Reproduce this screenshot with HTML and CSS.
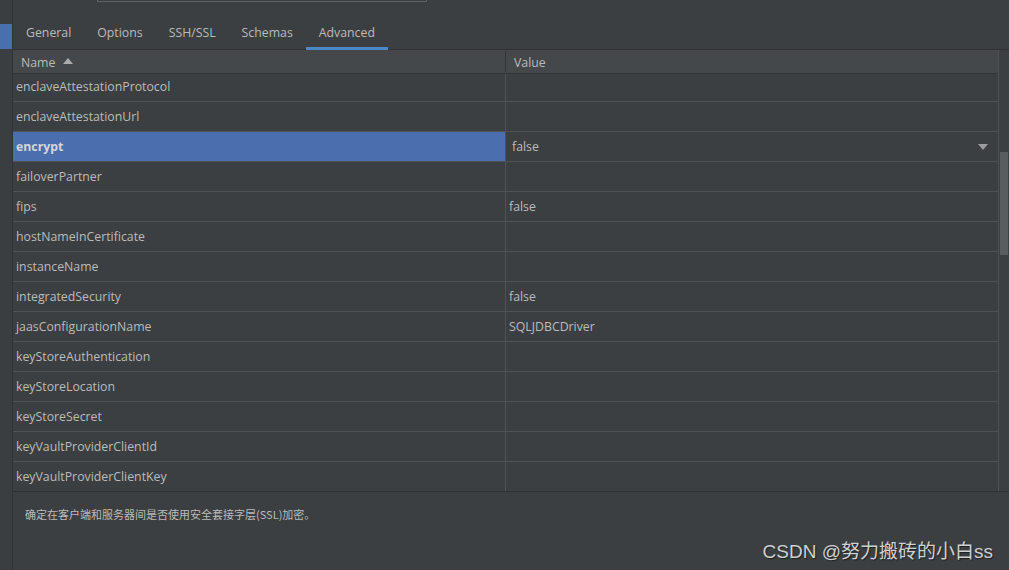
FILE: index.html
```html
<!DOCTYPE html>
<html>
<head>
<meta charset="utf-8">
<link rel="stylesheet" href="styles.css">
</head>
<body>
<div class="app">
  <div class="strip"><div class="strip-mark"></div></div>
  <div class="main">
    <div class="topbar"><div class="field"></div></div>
    <div class="tabs">
      <div class="tab">General</div>
      <div class="tab">Options</div>
      <div class="tab">SSH/SSL</div>
      <div class="tab">Schemas</div>
      <div class="tab active">Advanced</div>
    </div>
    <div class="tablearea">
      <div class="table">
        <div class="thead">
          <div class="th th-name">Name <svg class="sort" width="10" height="6" viewBox="0 0 10 6"><path d="M0 6 L5 0 L10 6 Z" fill="#a9abad"/></svg></div>
          <div class="th th-value">Value</div>
        </div>
        <div class="tbody">
          <div class="rows">
            <div class="row"><div class="c name">enclaveAttestationProtocol</div><div class="c val"></div></div>
            <div class="row"><div class="c name">enclaveAttestationUrl</div><div class="c val"></div></div>
            <div class="row sel"><div class="c name">encrypt</div><div class="c val editor">false<svg class="drop" width="10" height="6" viewBox="0 0 10 6"><path d="M0 0 L10 0 L5 6 Z" fill="#9a9c9e"/></svg></div></div>
            <div class="row"><div class="c name">failoverPartner</div><div class="c val"></div></div>
            <div class="row"><div class="c name">fips</div><div class="c val">false</div></div>
            <div class="row"><div class="c name">hostNameInCertificate</div><div class="c val"></div></div>
            <div class="row"><div class="c name">instanceName</div><div class="c val"></div></div>
            <div class="row"><div class="c name">integratedSecurity</div><div class="c val">false</div></div>
            <div class="row"><div class="c name">jaasConfigurationName</div><div class="c val">SQLJDBCDriver</div></div>
            <div class="row"><div class="c name">keyStoreAuthentication</div><div class="c val"></div></div>
            <div class="row"><div class="c name">keyStoreLocation</div><div class="c val"></div></div>
            <div class="row"><div class="c name">keyStoreSecret</div><div class="c val"></div></div>
            <div class="row"><div class="c name">keyVaultProviderClientId</div><div class="c val"></div></div>
            <div class="row"><div class="c name">keyVaultProviderClientKey</div><div class="c val"></div></div>
          </div>
        </div>
      </div>
      <div class="scrollbar"><div class="thumb"></div></div>
    </div>
    <div class="desc">确定在客户端和服务器间是否使用安全套接字层(SSL)加密。</div>
  </div>
</div>
<div class="watermark">CSDN @努力搬砖的小白ss</div>
</body>
</html>
```

FILE: styles.css
```css
html, body {
  margin: 0;
  padding: 0;
}
body {
  width: 1009px;
  height: 570px;
  overflow: hidden;
  background: #3c3f41;
  color: #bbbbbb;
  font-family: "Open Sans", "Noto Sans CJK SC", sans-serif;
  font-size: 12.3px;
  position: relative;
}
.app {
  display: flex;
  height: 570px;
}
.strip {
  width: 12px;
  flex: none;
  background: #3b3e41;
  border-right: 1px solid #313335;
}
.strip-mark {
  margin-top: 24px;
  height: 25px;
  width: 12px;
  background: #4b6eaf;
}
.main {
  flex: 1;
  display: flex;
  flex-direction: column;
  min-width: 0;
}
.topbar {
  height: 18px;
}
.field {
  margin-left: 84px;
  width: 328px;
  border: 1px solid #5e6163;
  border-top: none;
  margin-top: -1px;
  height: 2px;
}
.tabs {
  display: flex;
  height: 31px;
  border-bottom: 1px solid #323232;
}
.tab {
  padding: 0 13px;
  line-height: 30px;
  position: relative;
  color: #bbbbbb;
}
.tab.active::after {
  content: "";
  position: absolute;
  left: 0;
  right: 0;
  bottom: -1px;
  height: 3px;
  background: #4a88c7;
}
.tablearea {
  display: flex;
  height: 441px;
}
.table {
  width: 985px;
  border-right: 1px solid #4f5254;
  display: flex;
  flex-direction: column;
}
.thead {
  display: flex;
  height: 23px;
  background: #45484a;
  border-bottom: 1px solid #323435;
}
.th {
  padding-left: 8px;
  padding-top: 1px;
  box-sizing: border-box;
  display: flex;
  align-items: center;
}
.th-name {
  width: 493px;
  border-right: 1px solid #323435;
  height: 21px;
  margin-top: 1px;
}
.th-value {
  flex: 1;
  padding-left: 8px;
  padding-top: 2px;
}
.sort {
  margin-left: 8px;
  margin-top: -3px;
}
.tbody {
  flex: 1;
  overflow: hidden;
}
.rows {
  margin-top: -2px;
}
.row {
  display: flex;
  height: 29px;
  border-bottom: 1px solid #4f5254;
}
.c {
  line-height: 29px;
  padding-left: 3px;
  box-sizing: border-box;
  white-space: nowrap;
}
.c.name {
  width: 493px;
  border-right: 1px solid #4f5254;
}
.c.val {
  flex: 1;
}
.row.sel .name {
  background: #4b6eaf;
  font-weight: bold;
  color: #d4d6d8;
}
.editor {
  display: flex;
  align-items: center;
  justify-content: space-between;
  padding-left: 6px !important;
  padding-right: 10px;
}
.scrollbar {
  flex: 1;
  background: #3c3f41;
}
.thumb {
  margin-top: 102px;
  margin-left: 1px;
  width: 8px;
  height: 103px;
  background: #5a5d5f;
}
.desc {
  flex: 1;
  border-top: 1px solid #2f3133;
  padding: 15px 0 0 12px;
  line-height: 14px;
  font-family: "Noto Sans CJK SC", sans-serif;
  font-size: 11px;
}
.watermark {
  position: absolute;
  right: 16px;
  bottom: 7px;
  font-family: "Liberation Sans", "Noto Sans CJK SC", sans-serif;
  font-size: 19px;
  color: #cfd0d1;
  text-shadow: 1px 1px 1px #1e1f20;
}
```
